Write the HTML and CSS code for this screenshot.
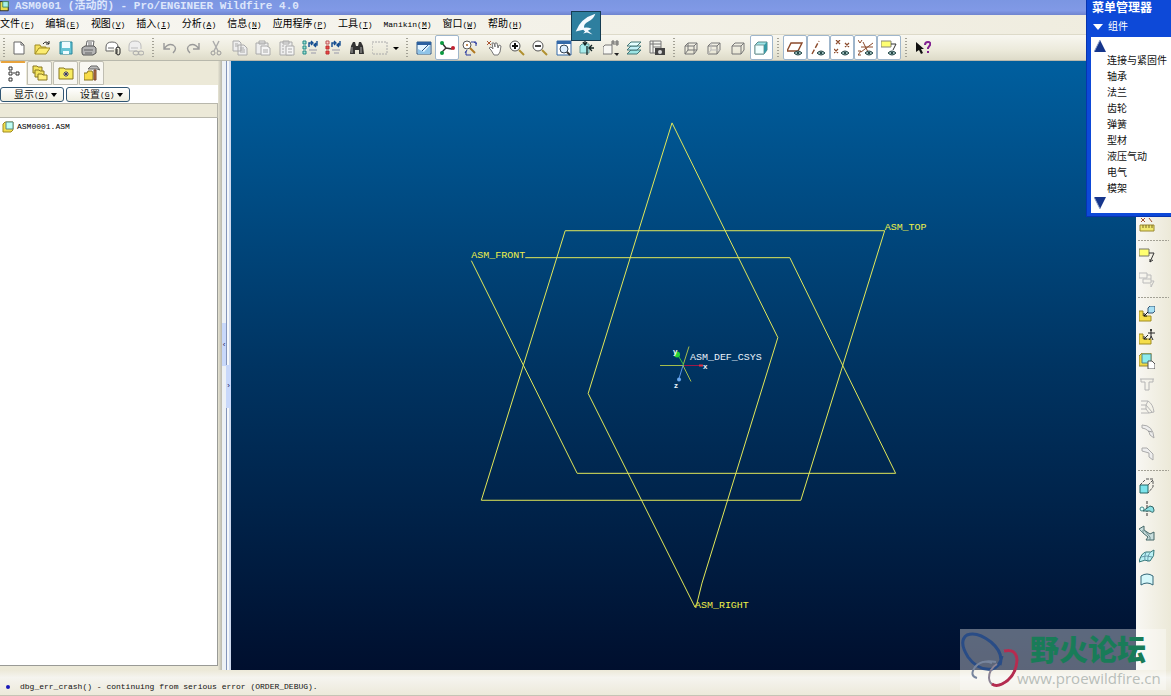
FILE: index.html
```html
<!DOCTYPE html>
<html lang="zh-CN">
<head>
<meta charset="utf-8">
<title>ASM0001 (活动的) - Pro/ENGINEER Wildfire 4.0</title>
<link rel="stylesheet" href="styles.css">
</head>
<body>
<div class="app">
  <header class="titlebar">
    <svg class="title-icon" viewBox="0 0 12 14"><path d="M0 0h9v10H0z" fill="#e8dc50" stroke="#222"/><path d="M3 0h6v6H3z" fill="#a8f0e8" stroke="#486"/></svg>
    <h1>ASM0001 (活动的) - Pro/ENGINEER Wildfire 4.0</h1>
  </header>

  <nav class="menubar">
    <button>文件<span>(<u>F</u>)</span></button>
    <button>编辑<span>(<u>E</u>)</span></button>
    <button>视图<span>(<u>V</u>)</span></button>
    <button>插入<span>(<u>I</u>)</span></button>
    <button>分析<span>(<u>A</u>)</span></button>
    <button>信息<span>(<u>N</u>)</span></button>
    <button>应用程序<span>(<u>P</u>)</span></button>
    <button>工具<span>(<u>T</u>)</span></button>
    <button><span>Manikin(<u>M</u>)</span></button>
    <button>窗口<span>(<u>W</u>)</span></button>
    <button>帮助<span>(<u>H</u>)</span></button>
  </nav>

  <div class="toolbar">
    <i class="grip first"></i>
    <div class="group g-file">
      <button aria-label="新建"><svg viewBox="0 0 16 16"><path d="M3 2h7l3 3v9H3z" fill="#fff" stroke="#666"/><path d="M10 2v3h3" fill="none" stroke="#666"/></svg></button>
      <button aria-label="打开"><svg viewBox="0 0 16 16"><path d="M1 14V5h5l1 2h5v2" fill="#f4e060" stroke="#a08c20"/><path d="M1 14l4-6h11l-4 6z" fill="#fcec70" stroke="#a08c20"/><path d="M9 4q3-4 6 0m0-3v3h-3" fill="none" stroke="#222"/></svg></button>
      <button aria-label="保存"><svg viewBox="0 0 16 16"><path d="M2 2h12v12H2z" fill="#67c4d4" stroke="#27859b"/><path d="M4 2h8v6H4zM5 11h6v3H5z" fill="#effcff"/></svg></button>
      <button aria-label="打印"><svg viewBox="0 0 16 16"><path d="M5 7l1-6h7l-1 6" fill="#fff" stroke="#666"/><path d="M1 8l3-2h9l2 2v5l-3 2H2l-1-2z" fill="#b4b4b4" stroke="#555"/><path d="M3 10h9M4 13h7M7 3h4M7 5h4" stroke="#666"/></svg></button>
      <button aria-label="发送"><svg viewBox="0 0 16 16"><path d="M1 11V7q0-5 6-5t6 5v1M1 11h8M3 8h6" fill="#fff" stroke="#666"/><path d="M11 14V9q0-2 2-2t2 2v4q0 2-2 2t-1-3V9" fill="none" stroke="#222"/></svg></button>
      <button aria-label="链接"><svg viewBox="0 0 16 16"><path d="M1 11V6q0-5 6-5t6 5v3M1 11h8M3 8h7" fill="#eee" stroke="#bbb"/><ellipse cx="8" cy="13" rx="3" ry="2" fill="none" stroke="#aaa"/><ellipse cx="13" cy="13" rx="3" ry="2" fill="none" stroke="#aaa"/></svg></button>
    </div>
    <i class="grip"></i>
    <div class="group g-edit">
      <button aria-label="撤消"><svg viewBox="0 0 16 16"><path d="M2 3v6h6M2 9q4-6 9-4 5 3 0 8" fill="none" stroke="#999" stroke-width="1.4"/></svg></button>
      <button aria-label="重做"><svg viewBox="0 0 16 16"><path d="M14 3v6H8M14 9q-4-6-9-4-5 3 0 8" fill="none" stroke="#999" stroke-width="1.4"/></svg></button>
      <button aria-label="剪切"><svg viewBox="0 0 16 16"><path d="M5 1l5 10M11 1L6 11" stroke="#aaa" stroke-width="1.4"/><circle cx="5" cy="13" r="2" fill="none" stroke="#999"/><circle cx="11" cy="13" r="2" fill="none" stroke="#999"/></svg></button>
      <button aria-label="复制"><svg viewBox="0 0 16 16"><path d="M1 1h6l2 2v8H1zM6 5h6l3 3v7H6z" fill="#eee" stroke="#aaa"/><path d="M8 8h4M8 10h5M8 12h5M3 4h3M3 6h3" stroke="#aaa"/></svg></button>
      <button aria-label="粘贴"><svg viewBox="0 0 16 16"><path d="M1 3h12v11H1zM4 1h6v3H4z" fill="#eee" stroke="#aaa"/><path d="M6 6h6l3 2v7H6z" fill="#f5f5f5" stroke="#aaa"/><path d="M8 10h5M8 12h5" stroke="#aaa"/></svg></button>
      <button aria-label="选择性粘贴"><svg viewBox="0 0 16 16"><path d="M1 2h12v13H1zM4 1h6v3H4z" fill="#eee" stroke="#aaa"/><path d="M7 6h8v9H7z" fill="#f5f5f5" stroke="#aaa"/><path d="M3 6h2M3 9h2M3 12h2M9 9h4M9 12h4" stroke="#aaa"/></svg></button>
      <button aria-label="再生"><svg viewBox="0 0 16 16"><path d="M1 1h3v3H1zM1 6h3v3H1zM1 11h3v3H1z" fill="#9ee0cc" stroke="#288"/><path d="M7 7V3h3M9 1l2 2-2 2M15 1v4h-3M14 7l-2-2 2-2" fill="none" stroke="#124c90" stroke-width="1.4"/><path d="M7 10h8M9 13h5" stroke="#99a"/></svg></button>
      <button aria-label="再生管理器"><svg viewBox="0 0 16 16"><path d="M1 1h3v3H1z" fill="#fcc" stroke="#b55"/><path d="M1 6h3v3H1zM1 11h3v3H1z" fill="#e44" stroke="#b33"/><path d="M7 7V3h3M9 1l2 2-2 2M15 1v4h-3M14 7l-2-2 2-2" fill="none" stroke="#124c90" stroke-width="1.4"/><path d="M7 10h8M9 13h5" stroke="#99a"/></svg></button>
      <button aria-label="查找"><svg viewBox="0 0 16 16"><path d="M1 14l1-8 2-4h2l1 4h2l1-4h2l2 4 1 8h-5v-4H6v4z" fill="#333"/><path d="M3 7v6M12 7v6" stroke="#aaa"/></svg></button>
      <button aria-label="选取框"><svg viewBox="0 0 16 16"><path d="M0 2h15v12H0z" fill="none" stroke="#aaa" stroke-dasharray="2 1"/></svg></button>
    </div>
    <button class="drop" aria-label="选取选项"><svg viewBox="0 0 8 8"><path d="M1 3h6L4 6z"/></svg></button>
    <i class="grip"></i>
    <div class="group g-view">
      <button aria-label="重画"><svg viewBox="0 0 16 16"><path d="M1 2h14v12H1z" fill="#e4f4ff" stroke="#2b5685"/><path d="M1 2h14v3H1z" fill="#2b60a0"/><path d="M2 14V9l6 3 6-7v9z" fill="#8fc4e8"/><path d="M6 11l6-6" stroke="#2b5685"/></svg></button>
      <button class="on" aria-label="旋转中心"><svg viewBox="0 0 16 16"><path d="M3 3l4 5 6 1M7 8l-5 5" fill="none" stroke="#333" stroke-width="1.4"/><circle cx="3" cy="3" r="2" fill="#0a9a40"/><circle cx="3" cy="13" r="2" fill="#0a9a40"/><circle cx="14" cy="8" r="2" fill="#c02030"/></svg></button>
      <button aria-label="定向模式"><svg viewBox="0 0 16 16"><circle cx="5" cy="5" r="4" fill="#fff" stroke="#555"/><circle cx="5" cy="5" r="1" fill="#a62"/><path d="M8 8l5 5" stroke="#b07820" stroke-width="2"/><path d="M9 2h5v4M4 11v4h5M12 2l3 2M3 13l2-3" fill="none" stroke="#2a3aa0"/></svg></button>
      <button aria-label="平移"><svg viewBox="0 0 16 16"><path d="M1 1l4 4M5 1L1 5" stroke="#a53"/><path d="M5 10L3 8l2-1 2 2-1-6h2l1 4V3h2l1 5 1-3 2 1-1 6-2 3H8z" fill="#fff" stroke="#777"/></svg></button>
      <button aria-label="放大"><svg viewBox="0 0 16 16"><circle cx="6" cy="6" r="5" fill="#fff" stroke="#555"/><path d="M3 6h6M6 3v6" stroke="#111" stroke-width="2"/><path d="M10 10l5 5" stroke="#b09030" stroke-width="2"/></svg></button>
      <button aria-label="缩小"><svg viewBox="0 0 16 16"><circle cx="6" cy="6" r="5" fill="#fff" stroke="#555"/><path d="M3 6h6" stroke="#444" stroke-width="2"/><path d="M10 10l5 5" stroke="#b09030" stroke-width="2"/></svg></button>
      <button aria-label="重新调整"><svg viewBox="0 0 16 16"><path d="M1 1h14v14H1z" fill="#fff" stroke="#3368a8"/><path d="M1 1h14v3H1z" fill="#3368a8"/><circle cx="8" cy="9" r="4" fill="#def" stroke="#345"/><path d="M11 12l3 3" stroke="#333" stroke-width="2"/></svg></button>
      <button aria-label="重定向"><svg viewBox="0 0 16 16"><path d="M1 6l2-2h7v9H1z" fill="#a8ecec" stroke="#699"/><path d="M8 6v9M6 0v4M4 2l2 3 2-3M15 8h-5m3-3l-3 3 3 3" fill="none" stroke="#122" stroke-width="1.3"/></svg></button>
      <button aria-label="已命名视图"><svg viewBox="0 0 16 16"><path d="M0 7l2-2h7v9H0z" fill="#f7f7f3" stroke="#777"/><path d="M9 5V1h2v4M9 3h2M13 1v4h2V1zM13 3h2" fill="none" stroke="#666"/><path d="M11 13h5l-2 3z" fill="#222"/></svg></button>
      <button aria-label="层"><svg viewBox="0 0 16 16"><path d="M1 14l4-4h10l-4 4z" fill="#9ce4e4" stroke="#477"/><path d="M1 10l4-4h10l-4 4z" fill="#c4f2f8" stroke="#477"/><path d="M1 6l4-4h10l-4 4z" fill="#e4ffff" stroke="#477"/></svg></button>
      <button aria-label="视图管理器"><svg viewBox="0 0 16 16"><path d="M1 1h11v12H1zM4 1v12M1 4h11M4 7h8" fill="#f5f5ef" stroke="#777"/><path d="M6 8h10v7H6z" fill="#444"/><circle cx="11" cy="12" r="2" fill="#ddd"/></svg></button>
    </div>
    <i class="grip"></i>
    <div class="group g-shade">
      <button aria-label="线框"><svg viewBox="0 0 16 16"><path d="M2 6l3-3h9v7l-3 4H2zM2 6h9v8M11 6l3-3M5 3v7h9M5 10l-3 4" fill="none" stroke="#777"/></svg></button>
      <button aria-label="隐藏线"><svg viewBox="0 0 16 16"><path d="M2 6l3-3h9v7l-3 4H2zM2 6h9v8M11 6l3-3" fill="none" stroke="#777"/><path d="M5 3v7h9M5 10l-3 4" fill="none" stroke="#bbb"/></svg></button>
      <button aria-label="消隐"><svg viewBox="0 0 16 16"><path d="M2 6l3-3h9v7l-3 4H2zM2 6h9v8M11 6l3-3" fill="none" stroke="#777"/></svg></button>
      <button class="on" aria-label="着色"><svg viewBox="0 0 16 16"><path d="M2 5l3-3h9v8l-3 4H2z" fill="#9fe6e9" stroke="#588"/><path d="M2 5h9v9H2z" fill="#f0ffff" stroke="#799"/><path d="M11 5l3-3v8l-3 4z" fill="#3799a4"/></svg></button>
    </div>
    <i class="grip"></i>
    <div class="group g-datum">
      <button class="on" aria-label="基准平面"><svg viewBox="0 0 16 16"><path d="M0 11l4-8h11l-4 8z" fill="none" stroke="#8b4a2b" stroke-width="1.4"/><path d="M7 13q4-4 8 0-4 4-8 0" fill="#9bb" stroke="#244"/><circle cx="11" cy="13" r="1" fill="#022"/></svg></button>
      <button class="on" aria-label="基准轴"><svg viewBox="0 0 16 16"><path d="M2 14L9 1" stroke="#8b4a2b" stroke-width="1.4" stroke-dasharray="5 2"/><path d="M7 13q4-4 8 0-4 4-8 0" fill="#9bb" stroke="#244"/><circle cx="11" cy="13" r="1" fill="#022"/></svg></button>
      <button class="on" aria-label="基准点"><svg viewBox="0 0 16 16"><path d="M2 0l4 4M6 0L2 4M11 3l4 4M15 3l-4 4M0 9l4 4M4 9l-4 4" stroke="#8b4a2b" stroke-width="1.2"/><path d="M7 13q4-4 8 0-4 4-8 0" fill="#9bb" stroke="#244"/><circle cx="11" cy="13" r="1" fill="#022"/></svg></button>
      <button class="on" aria-label="坐标系"><svg viewBox="0 0 16 16"><path d="M5 2l5 10M3 12l12-9M3 7h12M0 0l2 3 2-3M0 11h3l-3 4h3" fill="none" stroke="#8b4a2b"/><path d="M7 13q4-4 8 0-4 4-8 0" fill="#9bb" stroke="#244"/><circle cx="11" cy="13" r="1" fill="#022"/></svg></button>
      <button class="on" aria-label="注释"><svg viewBox="0 0 16 16"><path d="M0 1h10v6H0z" fill="#ffff72" stroke="#887"/><path d="M10 4h5l-3 6" fill="none" stroke="#333"/><path d="M7 13q4-4 8 0-4 4-8 0" fill="#9bb" stroke="#244"/><circle cx="11" cy="13" r="1" fill="#022"/></svg></button>
    </div>
    <i class="grip"></i>
    <div class="group g-help">
      <button aria-label="上下文帮助"><svg viewBox="0 0 16 16"><path d="M1 2v10l3-2 2 4 2-1-2-4h3z" fill="#111"/><path d="M10 5q0-3 3-3t2 3l-2 3v1M13 11v2" fill="none" stroke="#802090" stroke-width="2"/></svg></button>
    </div>
  </div>

  <main class="workspace">
    <aside class="navigator">
      <div class="tabs">
        <button class="tab active" aria-label="模型树"><svg viewBox="0 0 16 16"><path d="M4 1h3v3H4zM4 6h3v3H4zM4 12h3v3H4zM11 6h3v3h-3z" fill="#fff" stroke="#333"/><path d="M8 7h2" stroke="#333"/></svg></button>
        <button class="tab" aria-label="文件夹浏览器"><svg viewBox="0 0 16 16"><path d="M1 1h4l1 1h4v6H1z" fill="#f4e45c" stroke="#887720"/><path d="M3 5h4l1 1h4v6H3z" fill="#f4e45c" stroke="#887720"/><path d="M6 9h4l1 1h4v5H6z" fill="#fff07c" stroke="#887720"/></svg></button>
        <button class="tab" aria-label="收藏夹"><svg viewBox="0 0 16 16"><path d="M1 3h5l1 1h8v10H1z" fill="#f8ec60" stroke="#887720"/><path d="M8 6v6M5 9h6M6 7l4 4M10 7l-4 4" stroke="#227" stroke-width=".8"/></svg></button>
        <button class="tab" aria-label="连接"><svg viewBox="0 0 16 16"><path d="M0 15V8h3l1-2h4l1 2v7z" fill="#f8dc48" stroke="#887720"/><path d="M4 4l3-3h6l3 4-3-1H7z" fill="#bbb" stroke="#666"/><path d="M10 5h2v10h-2z" fill="#c37a3c" stroke="#743"/></svg></button>
      </div>
      <div class="tree-actions">
        <button>显示<span>(<u>O</u>)</span><svg viewBox="0 0 8 8"><path d="M1 2h6L4 6z"/></svg></button>
        <button>设置<span>(<u>G</u>)</span><svg viewBox="0 0 8 8"><path d="M1 2h6L4 6z"/></svg></button>
      </div>
      <div class="tree-head"></div>
      <ul class="tree">
        <li><svg viewBox="0 0 12 12"><path d="M1 3l2-2h8v8l-2 2H1z" fill="#f2de4c" stroke="#a08c20"/><path d="M4 1h7v7H4z" fill="#c0fff4" stroke="#588"/></svg>ASM0001.ASM</li>
      </ul>
    </aside>

    <div class="splitter">
      <button class="left" aria-label="收起导航器">‹</button>
      <button class="right" aria-label="展开浏览器">›</button>
    </div>

    <section class="viewport">
      <svg class="model" viewBox="231 60 905 610">
        <g class="planes">
          <path d="M885 230H565L481 500H801Z"/>
          <path d="M471 260L577 473H896L790 257H525"/>
          <path d="M697 603L702 583L778 337L672 122L588 393L684 585L695 607Z"/>
        </g>
        <g class="plane-names">
          <text x="885" y="229">ASM_TOP</text>
          <text x="471" y="257">ASM_FRONT</text>
          <text x="695" y="608">ASM_RIGHT</text>
        </g>
        <g class="csys">
          <path d="M660 365H684M689 346L683 365L691 381" stroke="#a6bd4c"/>
          <path d="M684 365L677 353" stroke="#30c040"/><circle cx="677" cy="354" r="3" fill="#25d535"/>
          <path d="M684 365H703" stroke="#a01848"/><path d="M699 365h4" stroke="#e03040" stroke-width="2"/>
          <path d="M683 365L679 378" stroke="#5b95e6"/><circle cx="679" cy="379" r="2" fill="#69a8ee"/>
          <text class="axis" x="703" y="369">x</text><text class="axis" x="673" y="353">y</text><text class="axis" x="674" y="388">z</text>
          <text x="690" y="359">ASM_DEF_CSYS</text>
        </g>
      </svg>
    </section>

    <div class="sidebar">
      <div class="stack s1">
        <button aria-label="测量"><svg viewBox="0 0 16 16"><path d="M2 1l4 4M6 1L2 5M10 1l3 4" stroke="#a05030"/><path d="M1 8h14v6H1z" fill="#f0e870" stroke="#998830"/><path d="M4 8v3M7 8v3M10 8v3M13 8v3" stroke="#776620"/></svg></button>
      </div>
      <i class="rule"></i>
      <div class="stack s2">
        <button aria-label="注释特征"><svg viewBox="0 0 16 16"><path d="M0 1h10v7H0z" fill="#ffff70" stroke="#776"/><path d="M10 5h5l-4 9v-3M11 14l3-2" fill="none" stroke="#333"/></svg></button>
        <button aria-label="注释传播"><svg viewBox="0 0 16 16"><path d="M0 1h8v5H0zM4 7h8v4H4zM8 3h4v4M12 9h3l-3 6v-3" fill="none" stroke="#bbb"/></svg></button>
      </div>
      <i class="rule"></i>
      <div class="stack s3">
        <button aria-label="装配元件"><svg viewBox="0 0 16 16"><path d="M0 5h4v5h8v5H0z" fill="#f4dd4a" stroke="#a08c20"/><path d="M9 2l2-2h5v5l-2 2H9z" fill="#a8e0f4" stroke="#357"/><path d="M9 6l-4 4M5 7v3h3" fill="none" stroke="#111"/></svg></button>
        <button aria-label="装配人体模型"><svg viewBox="0 0 16 16"><path d="M0 5h4v5h8v5H0z" fill="#f4dd4a" stroke="#a08c20"/><circle cx="12" cy="1" r="1"/><path d="M9 4h7M12 2v6l-2 3M12 7l2 4M9 6l-4 4M5 7v3h3" fill="none" stroke="#222"/></svg></button>
        <button aria-label="创建元件"><svg viewBox="0 0 16 16"><path d="M0 3l3-3h9v9l-3 4H0z" fill="#eed842" stroke="#998630"/><path d="M3 1h9v9H3z" fill="#8cecec" stroke="#588"/><path d="M9 8h4l3 3v5H9z" fill="#fff" stroke="#555"/></svg></button>
        <button aria-label="孔"><svg viewBox="0 0 16 16"><path d="M1 3h14M2 3v3h4v8h4V6h4V3" fill="none" stroke="#b4b4b4"/></svg></button>
        <button aria-label="壳"><svg viewBox="0 0 16 16"><path d="M2 2h7q5 3 6 11l-5 1H2M9 2L7 6l6 7M2 6h5v4H2M7 10l3 4" fill="none" stroke="#b4b4b4"/></svg></button>
        <button aria-label="倒圆角"><svg viewBox="0 0 16 16"><path d="M3 2q11 0 12 13l-4-3Q10 6 3 5z" fill="#eee" stroke="#aaa"/><path d="M9 8l4 1" stroke="#999"/></svg></button>
        <button aria-label="倒角"><svg viewBox="0 0 16 16"><path d="M3 2h5l6 6v6l-4-3V7L3 5z" fill="#eee" stroke="#aaa"/></svg></button>
      </div>
      <i class="rule"></i>
      <div class="stack s4">
        <button aria-label="拉伸"><svg viewBox="0 0 16 16"><path d="M1 7h8v8H1z" fill="#7ce4ec" stroke="#266"/><path d="M1 7l5-5M9 7l5-5v7l-5 6M7 1h8" fill="none" stroke="#555" stroke-dasharray="3 1"/></svg></button>
        <button aria-label="旋转"><svg viewBox="0 0 16 16"><path d="M8 0v16" stroke="#333" stroke-dasharray="3 1"/><circle cx="3" cy="8" r="2" fill="#dff" stroke="#488"/><path d="M4 10l7-5q4 0 4 4t-4 1z" fill="#8de1e5" stroke="#366"/></svg></button>
        <button aria-label="扫描混合"><svg viewBox="0 0 16 16"><path d="M0 4l5-3v4l6 4 4-2v8H7l2-3-5-4z" fill="#c9dede" stroke="#466"/><path d="M0 4l4 4v-3M5 5l6 7v3" fill="none" stroke="#688"/></svg></button>
        <button aria-label="边界混合"><svg viewBox="0 0 16 16"><path d="M0 13Q2 4 7 3q5 1 8-2 1 6-4 11-5-2-11 1z" fill="#baf0f4" stroke="#377"/><path d="M2 8q6-2 11 0M7 3q-2 4-1 9M12 3Q8 6 9 13" fill="none" stroke="#69a"/></svg></button>
        <button aria-label="填充"><svg viewBox="0 0 16 16"><path d="M2 4q6-4 12 0v9Q8 9 2 13z" fill="#d5f7fa" stroke="#367"/></svg></button>
      </div>
    </div>
  </main>

  <footer class="status"><i></i><p>dbg_err_crash() - continuing from serious error (ORDER_DEBUG).</p></footer>

  <div class="bird">
    <svg viewBox="0 0 30 30"><path d="M25 2Q9 7 4 21l8-2 2 2-2 2 4-1 6 2-5-4 4-2q-5-2-8-1-1-4 5-7 5-2 7-8z" fill="#f5faff"/></svg>
  </div>

  <section class="manager">
    <h2>菜单管理器</h2>
    <h3><svg viewBox="0 0 10 6"><path d="M0 0h10L5 6z" fill="#fff"/></svg>组件</h3>
    <div class="manager-body">
      <button class="scroll" aria-label="向上"><svg viewBox="0 0 12 12"><path d="M6 0l6 12H0z" fill="#16368c"/><path d="M6 0L0 12" stroke="#8ba0cc"/></svg></button>
      <ul>
        <li><a href="#">连接与紧固件</a></li>
        <li><a href="#">轴承</a></li>
        <li><a href="#">法兰</a></li>
        <li><a href="#">齿轮</a></li>
        <li><a href="#">弹簧</a></li>
        <li><a href="#">型材</a></li>
        <li><a href="#">液压气动</a></li>
        <li><a href="#">电气</a></li>
        <li><a href="#">模架</a></li>
      </ul>
      <button class="scroll" aria-label="向下"><svg viewBox="0 0 12 12"><path d="M0 0h12L6 12z" fill="#16368c"/><path d="M0 0l6 12" stroke="#8ba0cc"/></svg></button>
    </div>
  </section>

  <div class="watermark">
    <svg viewBox="0 0 60 60"><g fill="none"><path d="M40 36Q44 24 31 13 17 2 7 6-2 12 8 28q10 14 24 12 8-2 10-13" stroke="#294c86" stroke-width="3"/><path d="M36 33q-14-3-21 5-6 9 2 11M15 38q7-8 17-4" stroke="#77859d" stroke-width="2"/><path d="M44 22q12-3 13 9-1 17-15 24-12 4-13-6 0-9 8-14" stroke="#8c8495" stroke-width="2"/><path d="M44 22q12-3 13 9-1 17-15 24-6 3-10 0" stroke="#b52c50" stroke-width="3"/></g></svg>
    <div class="brand"><strong>野火论坛</strong><span>www.proewildfire.cn</span></div>
  </div>
</div>
</body>
</html>
```
FILE: styles.css
```css
* { box-sizing: border-box; }
body {
  margin: 0;
  font: 10px/16px "Liberation Sans", "Noto Sans CJK SC", sans-serif;
  color: #111;
}
button {
  margin: 0;
  padding: 0;
  border: 0;
  background: none;
  color: inherit;
  font: inherit;
  white-space: nowrap;
}
svg { display: block; }
ul { margin: 0; padding: 0; list-style: none; }
h1, h2, h3, p { margin: 0; }
a { color: inherit; text-decoration: none; }

.app {
  position: relative;
  display: grid;
  grid-template-rows: 15px 20px 26px 1fr 26px;
  height: 100vh;
  overflow: hidden;
  background: #ece9d8;
}

/* title and menus */
.titlebar {
  display: flex;
  align-items: center;
  gap: 4px;
  overflow: hidden;
  background: linear-gradient(#7b96e2, #8199e6 70%, #6f84cf);
}
.title-icon { width: 11px; height: 14px; }
.titlebar h1 {
  padding-bottom: 3px;
  font: bold 11px/12px "Liberation Mono", "Noto Sans CJK SC", monospace;
  color: #dde6fb;
  white-space: pre;
}
.menubar {
  display: flex;
  align-items: center;
  gap: 11px;
  padding: 0 0 2px;
  background: linear-gradient(90deg, #f7f6f1, #efecde);
  border-bottom: 1px solid #dddac9;
}
.menubar button { color: #000; }
.menubar span, .tree-actions span {
  font: 8px "Liberation Mono", monospace;
}

/* toolbar */
.toolbar {
  display: flex;
  background: linear-gradient(#f8f7f1, #eceadb 60%, #dedbc9);
  border-bottom: 1px solid #b8b8ac;
}
.grip {
  flex: none;
  width: 10px;
  margin: 3px 0;
  background: repeating-linear-gradient(#a3a195 0 1px, transparent 1px 3px) center / 2px 100% no-repeat;
}
.grip.first { width: 7px; }
.group { display: grid; grid-auto-flow: column; grid-auto-columns: 1fr; flex: none; }
.group button { display: grid; place-items: center; border: 1px solid transparent; }
.group svg { width: 16px; height: 16px; }
.group .on { background: #fff; border-color: #9fb6cc; border-radius: 2px; }
.g-file { width: 141px; }
.g-edit { width: 234px; }
.g-view { width: 257px; }
.g-shade { width: 94px; }
.g-datum { width: 118px; }
.g-help { width: 24px; }
.drop { width: 10px; }
.drop svg { width: 8px; height: 8px; }

/* main area */
.workspace {
  display: grid;
  grid-template-columns: 222px 9px 1fr 35px;
  min-height: 0;
}
.navigator {
  display: flex;
  flex-direction: column;
  padding: 0 4px 4px 0;
  background: linear-gradient(90deg, #ece9d8 98%, #b8b7ac);
}
.tabs { display: flex; gap: 1px; height: 24px; }
.tab {
  display: grid;
  place-items: center;
  width: 25px;
  background: #f8f7f2;
  border: 1px solid #c0beb2;
  border-radius: 2px 2px 0 0;
}
.tab.active { width: 26px; background: #fff; border-color: #fff; border-top: 2px solid #e8a33c; }
.tab svg { width: 16px; height: 16px; }
.tree-actions {
  display: flex;
  gap: 2px;
  height: 18px;
  padding: 2px 0 1px;
  background: #fff;
}
.tree-actions button {
  display: flex;
  align-items: center;
  width: 64px;
  height: 15px;
  padding-left: 13px;
  border: 1px solid #315674;
  border-radius: 3px;
  background: linear-gradient(#fff, #eeeddf);
}
.tree-actions svg { width: 8px; height: 8px; margin-left: 2px; }
.tree-head {
  height: 15px;
  border: 1px solid #b8b7ac;
  border-left: 0;
  background: #ece9d8;
}
.tree {
  flex: 1;
  background: #fff;
  border-right: 1px solid #999a96;
  border-bottom: 1px solid #999a96;
}
.tree li {
  display: flex;
  align-items: center;
  gap: 3px;
  padding: 1px 2px;
  font: 8px/16px "Liberation Mono", monospace;
  color: #000;
}
.tree svg { width: 12px; height: 12px; }

.splitter {
  display: grid;
  grid-template-columns: 4px 5px;
  background: linear-gradient(90deg, #edf1f5 0 4px, #8394ba 4px 5px, #f4f7fa 5px 7px, #cdd9ee 7px);
}
.splitter button { align-self: center; overflow: hidden; background: #c8d8fa; color: #225; font-size: 8px; }
.splitter .left { height: 43px; margin-bottom: 42px; }
.splitter .right { height: 43px; margin-top: 41px; }

.viewport { min-width: 0; min-height: 0; background: linear-gradient(#005f9f, #003462 50%, #000f2e); }
.model { width: 100%; height: 100%; }
.model text { font: 10px "Liberation Mono", monospace; }
.planes path { fill: none; stroke: #e2e858; stroke-width: 1px; }
.plane-names text { fill: #eef04a; }
.csys path { fill: none; }
.csys text { fill: #e8f1fa; }
.csys .axis { font: bold 8px "Liberation Sans", sans-serif; }

.sidebar {
  padding-top: 152px;
  overflow: hidden;
  background: linear-gradient(90deg, #f8f7f3, #ece9d8);
}
.stack { display: grid; grid-auto-rows: 1fr; padding-left: 3px; }
.stack button { display: grid; align-items: center; width: 16px; }
.stack svg { width: 16px; height: 16px; }
.s1 { height: 23px; }
.s2 { height: 48px; }
.s3 { height: 164px; }
.s4 { height: 118px; }
.rule {
  display: block;
  height: 8px;
  margin: 0 2px;
  background: repeating-linear-gradient(90deg, #a3a195 0 2px, transparent 2px 3px) center / 100% 1px no-repeat;
}
.s2 + .rule { height: 10px; }

/* status line */
.status {
  display: flex;
  align-items: center;
  gap: 10px;
  padding: 8px 6px 0;
  background: linear-gradient(#ece9d8, #f5f4ef 30%, #ece9da);
  border-bottom: 1px solid #c5c3b5;
}
.status i { width: 4px; height: 4px; border-radius: 50%; background: #1818b8; }
.status p { font: 8px/12px "Liberation Mono", monospace; }

/* floating pieces */
.bird {
  position: absolute;
  left: 571px;
  top: 11px;
  width: 30px;
  height: 30px;
  border: 1px solid #163c52;
  background: #2e7f9f;
}
.manager {
  position: absolute;
  top: 0;
  right: 0;
  width: 85px;
  padding: 0 0 3px 4px;
  background: #0d49d8;
  border-left: 1px solid #0734b0;
  border-bottom: 1px solid #0734b0;
  color: #fff;
}
.manager h2 { font-size: 12px; line-height: 17px; padding-left: 1px; }
.manager h3 {
  display: flex;
  align-items: center;
  gap: 5px;
  padding: 2px;
  font-size: 10px;
  font-weight: normal;
}
.manager h3 svg { width: 10px; height: 6px; }
.manager-body { padding: 3px 4px 4px 3px; background: #fff; color: #111; }
.manager ul { padding-top: 1px; }
.manager li { padding-left: 13px; white-space: nowrap; }
.manager li a { display: block; }
.scroll { display: block; }
.scroll svg { width: 12px; height: 12px; }

.watermark {
  position: absolute;
  right: 5px;
  bottom: 6px;
  display: flex;
  width: 206px;
  height: 61px;
  background: rgba(255, 255, 255, 0.36);
}
.watermark svg { flex: none; width: 60px; height: 60px; }
.brand {
  display: flex;
  flex-direction: column;
  gap: 2px;
  margin-left: -3px;
  white-space: nowrap;
}
.brand strong { padding-left: 13px; font: 900 29px/38px "Noto Sans CJK SC", sans-serif; color: #197c58; }
.brand span { font: 15px/18px "Open Sans", sans-serif; color: #b9beb9; }
```
